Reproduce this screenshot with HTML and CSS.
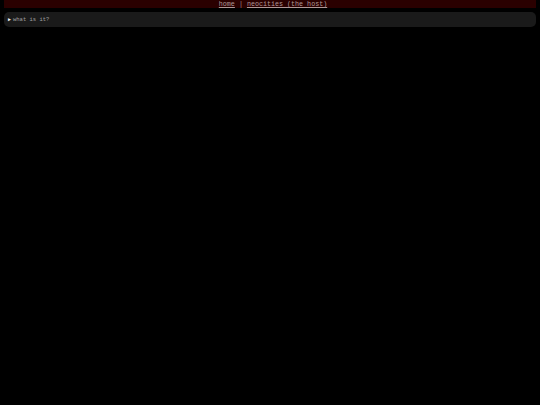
FILE: index.html
```html
<!DOCTYPE html>
<html>
<head>
<meta charset="utf-8">
<link rel="stylesheet" href="styles.css">
</head>
<body>
<nav class="topbar">
  <a href="#" class="link">home</a> <span class="sep">|</span> <a href="#" class="link">neocities (the host)</a>
</nav>
<details class="box">
  <summary class="summary">what is it?</summary>
</details>
</body>
</html>
```
FILE: styles.css
```css
html, body {
  margin: 0;
  padding: 0;
  background: #000;
}
body {
  padding: 0 4px;
  font-family: "Liberation Mono", "DejaVu Sans Mono", monospace;
}
.topbar {
  background: #2a0000;
  height: 8px;
  line-height: 8px;
  font-size: 6.7px;
  text-align: center;
  color: #a08c8c;
  padding-left: 6px;
}
.link {
  color: #b09898;
  text-decoration: underline;
}
.sep {
  color: #a08c8c;
}
.box {
  margin-top: 4px;
  background: #1a1a1a;
  border-radius: 5px;
  height: 15px;
  box-sizing: border-box;
  padding: 0 3px;
}
.summary {
  font-size: 5.5px;
  line-height: 15px;
  color: #a0a0a0;
  cursor: pointer;
  list-style: none;
  padding-left: 1px;
}
.summary::before {
  content: "\25B6";
  color: #f0f0f0;
  margin-right: 2px;
  font-size: 5px;
}
```
